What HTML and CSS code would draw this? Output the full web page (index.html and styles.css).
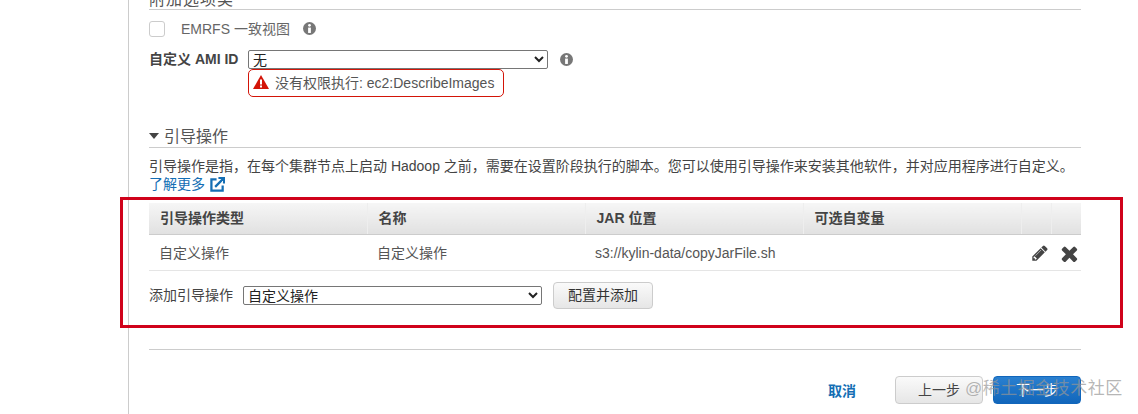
FILE: index.html
```html
<!DOCTYPE html>
<html lang="zh">
<head>
<meta charset="utf-8">
<title>引导操作</title>
<link rel="stylesheet" href="styles.css">
</head>
<body>
<main class="panel">
  <h3 class="section-title clipped">附加选项类</h3>
  <div class="check-row">
    <span class="checkbox"></span>
    <span class="check-label">EMRFS 一致视图</span>
    <svg class="info" viewBox="0 0 14 14"><circle cx="7" cy="7" r="7" fill="#777"/><circle cx="7" cy="3.600" r="1.500" fill="#fff"/><rect x="5.500" y="6" width="3" height="5.800" fill="#fff"/></svg>
  </div>
  <div class="ami-row">
    <label class="ami-label">自定义 AMI ID</label>
    <div class="ami-field">
      <select class="ami-select"><option>无</option></select>
      <div class="error-box">
        <svg class="warn" viewBox="0 0 16 14"><path d="M8 0 16 14H0z" fill="#d31408"/><rect x="7" y="4.500" width="2" height="5" fill="#fff"/><rect x="7" y="10.500" width="2" height="2" fill="#fff"/></svg>
        <span>没有权限执行: ec2:DescribeImages</span>
      </div>
    </div>
    <svg class="info info-ami" viewBox="0 0 14 14"><circle cx="7" cy="7" r="7" fill="#777"/><circle cx="7" cy="3.600" r="1.500" fill="#fff"/><rect x="5.500" y="6" width="3" height="5.800" fill="#fff"/></svg>
  </div>
  <h3 class="section-title boot-title"><span class="caret"></span>引导操作</h3>
  <p class="desc">引导操作是指，在每个集群节点上启动 Hadoop 之前，需要在设置阶段执行的脚本。您可以使用引导操作来安装其他软件，并对应用程序进行自定义。</p>
  <a class="learn">了解更多
    <svg class="ext" viewBox="0 0 16 16"><path d="M7 2.500H1.500v12h12V9" fill="none" stroke="#146eb4" stroke-width="2.400"/><path d="M5.500 10.500 14 2M9 1h6v6" fill="none" stroke="#146eb4" stroke-width="2.400"/></svg>
  </a>
  <table class="actions">
    <thead>
      <tr><th>引导操作类型</th><th>名称</th><th>JAR 位置</th><th>可选自变量</th><th></th><th></th></tr>
    </thead>
    <tbody>
      <tr>
        <td>自定义操作</td><td>自定义操作</td><td>s3://kylin-data/copyJarFile.sh</td><td></td>
        <td class="icon-cell"><svg class="tool" viewBox="0 0 1792 1792"><path fill="#444" d="M491 1536l91-91-235-235-91 91v107h128v128h107zm523-928q0-22-22-22-10 0-17 7l-542 542q-7 7-7 17 0 22 22 22 10 0 17-7l542-542q7-7 7-17zm-54-192l416 416-832 832h-416v-416zm683 96q0 53-37 90l-166 166-416-416 166-165q36-38 90-38 53 0 91 38l235 234q37 39 37 91z"/></svg></td>
        <td class="icon-cell"><svg class="tool tool-x" viewBox="250 250 1300 1300"><path fill="#444" d="M1490 1322q0 40-28 68l-136 136q-28 28-68 28t-68-28l-294-294-294 294q-28 28-68 28t-68-28l-136-136q-28-28-28-68t28-68l294-294-294-294q-28-28-28-68t28-68l136-136q28-28 68-28t68 28l294 294 294-294q28-28 68-28t68 28l136 136q28 28 28 68t-28 68l-294 294 294 294q28 28 28 68z"/></svg></td>
      </tr>
    </tbody>
  </table>
  <div class="add-row">
    <label class="add-label">添加引导操作</label>
    <select class="add-select"><option>自定义操作</option></select>
    <button class="btn btn-config">配置并添加</button>
  </div>
  <hr class="rule">
  <footer class="footer">
    <a class="cancel">取消</a>
    <button class="btn btn-nav">上一步</button>
    <button class="btn btn-nav btn-primary">下一步</button>
  </footer>
</main>
<div class="highlight"></div>
<div class="watermark">@稀土掘金技术社区</div>
</body>
</html>
```
FILE: styles.css
```css
* { box-sizing: border-box; }
html, body { margin: 0; height: 414px; overflow: hidden; background: #fff; }
body { position: relative; font-family: "Liberation Sans", "Noto Sans CJK SC", sans-serif; font-size: 14px; color: #444; }
.panel { margin-left: 128px; width: 953px; height: 414px; padding-left: 20px; border-left: 1px solid #ccc; }
.section-title { margin: 0; font-size: 16px; font-weight: 400; color: #444; border-bottom: 1px solid #ccc; }
.clipped { height: 10px; line-height: 0; padding-top: 0; overflow: hidden; color: #555; letter-spacing: 1px; }
.check-row { display: flex; align-items: center; height: 16px; margin-top: 11px; }
.checkbox { width: 16px; height: 16px; border: 1px solid #ccc; border-radius: 3px; background: #fff; }
.check-label { margin-left: 16px; color: #666; line-height: 16px; }
.info { width: 13px; height: 13px; margin-left: 13px; margin-top: -2px; }
.ami-row { display: flex; align-items: flex-start; margin-top: 13px; }
.ami-label { width: 99px; font-weight: 700; line-height: 19px; color: #444; white-space: nowrap; }
.ami-field { width: 300px; }
.ami-select { display: block; width: 300px; height: 19px; padding: 0; border: 1px solid #767676; border-radius: 2px; background: #fff; font: 14px/17px "Liberation Sans", "Noto Sans CJK SC", sans-serif; color: #222; }
.error-box { display: flex; align-items: center; width: 256px; height: 28px; border: 1px solid #d31408; border-radius: 5px; padding-left: 4px; color: #555; line-height: 26px; }
.warn { width: 16px; height: 14px; margin-right: 6px; margin-top: -2px; }
.info-ami { margin: 3px 0 0 12px; }
.boot-title { display: flex; align-items: center; margin-top: 29px; height: 22px; line-height: 21px; padding-bottom: 1px; color: #555; }
.caret { width: 0; height: 0; margin-right: 5px; border: 5.500px solid transparent; border-top: 6px solid #444; border-bottom: 0; }
.desc { margin: 8px 0 0; line-height: 20px; height: 20px; white-space: nowrap; color: #444; }
.learn { display: flex; align-items: center; height: 18px; margin-top: -1px; color: #146eb4; line-height: 18px; }
.ext { width: 15px; height: 15px; margin-left: 5px; }
.actions { width: 932px; margin-top: 10px; border-collapse: collapse; table-layout: fixed; }
.actions th:nth-child(-n+4), .actions td:nth-child(-n+4) { width: 218px; }
.actions th:nth-child(n+5), .actions td:nth-child(n+5) { width: 30px; }
.actions th { height: 31px; padding: 0 0 0 11px; line-height: 20px; text-align: left; font-weight: 700; font-size: 14px; color: #444; background: linear-gradient(#f6f6f6, #e1e1e1); border-bottom: 1px solid #ccc; border-left: 1px solid #eee; }
.actions th:first-child { border-left: 0; }
.actions td { height: 36px; padding: 1px 0 0 10px; line-height: 20px; border-bottom: 1px solid #e5e5e5; color: #555; white-space: nowrap; }
.actions td:first-child { padding-left: 10px; }
.actions .icon-cell { padding: 2px 0 0 10px; }
.tool { display: block; width: 18px; height: 18px; }
.tool-x { width: 17px; height: 17px; margin-left: 0; }
.add-row { display: flex; align-items: center; margin-top: 11px; height: 27px; }
.add-label { width: 94px; color: #444; white-space: nowrap; line-height: 20px; }
.add-select { width: 299px; height: 19px; padding: 0; border: 1px solid #767676; border-radius: 2px; background: #fff; font: 14px/17px "Liberation Sans", "Noto Sans CJK SC", sans-serif; color: #222; }
.btn { font: 14px/18px "Liberation Sans", "Noto Sans CJK SC", sans-serif; color: #444; border: 1px solid #ccc; border-radius: 4px; background: linear-gradient(#fafafa, #e6e6e6); padding: 0; }
.btn-config { width: 100px; height: 27px; margin-left: 11px; color: #333; }
.rule { margin: 40px 0 0; border: 0; border-top: 1px solid #ccc; width: 932px; }
.footer { display: flex; align-items: center; width: 932px; margin-top: 26px; height: 28px; padding-left: 679px; }
.cancel { width: 67px; color: #146eb4; font-weight: 700; }
.btn-nav { width: 88px; height: 28px; }
.btn-primary { margin-left: 10px; background: linear-gradient(#2a80d0, #1166bb); border-color: #1166bb; color: #fff; }
.highlight { position: absolute; left: 120px; top: 197px; width: 1003px; height: 131px; border: 3px solid #d0021b; pointer-events: none; }
.watermark { position: absolute; left: 965px; top: 377px; font-size: 17px; line-height: 24px; color: rgba(150, 150, 150, 0.7); letter-spacing: 0.5px; }
```
